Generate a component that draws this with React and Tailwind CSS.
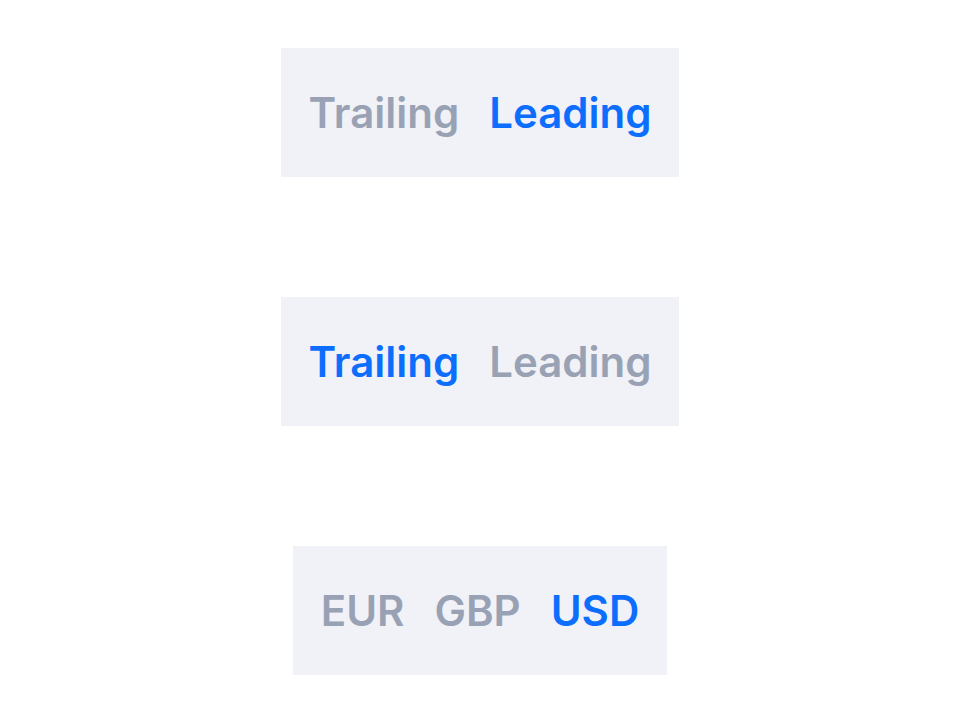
const groups = [
  { items: ['Trailing', 'Leading'], active: 1 },
  { items: ['Trailing', 'Leading'], active: 0 },
  { items: ['EUR', 'GBP', 'USD'], active: 2 },
];

function Segment({ items, active }) {
  return (
    <div className="flex h-[129px] items-center gap-[30px] bg-[#f0f2f7] px-7">
      {items.map((label, i) => (
        <span
          key={label}
          className={
            'text-[42px] font-semibold leading-none ' +
            (i === active ? 'text-[#0d6efd]' : 'text-[#99a2b4]')
          }
        >
          {label}
        </span>
      ))}
    </div>
  );
}

export default function App() {
  return (
    <div
      className="flex min-h-[723px] flex-col items-center gap-[120px] bg-white py-12"
      style={{ fontFamily: 'Inter, "Noto Sans", sans-serif' }}
    >
      {groups.map((g, i) => (
        <Segment key={i} items={g.items} active={g.active} />
      ))}
    </div>
  );
}
